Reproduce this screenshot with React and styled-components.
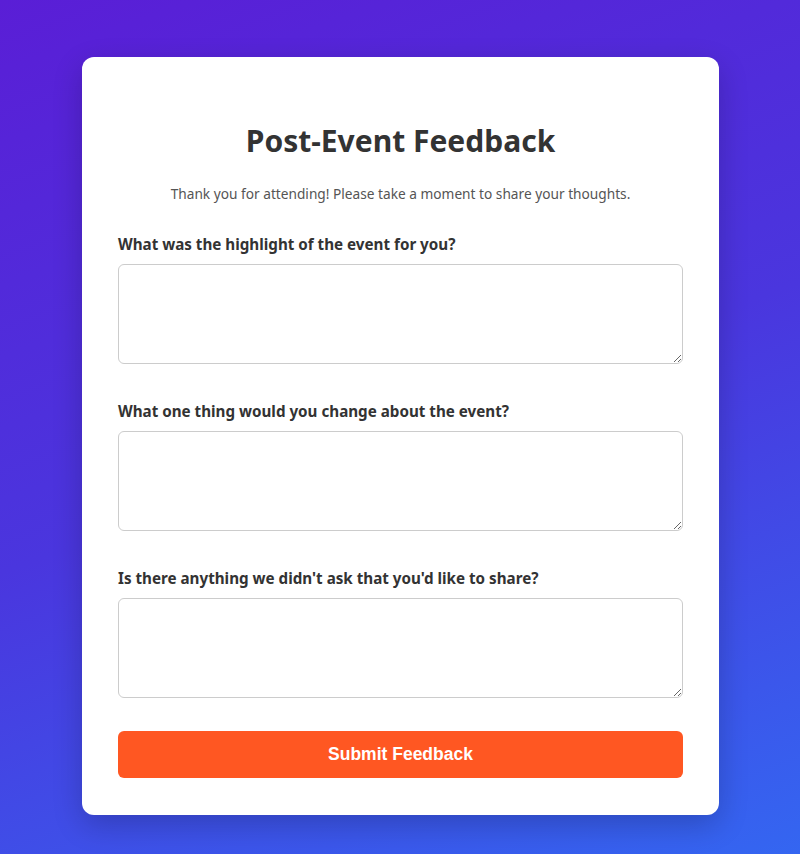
import React from "react";
import styled, { createGlobalStyle } from "styled-components";

const GlobalStyle = createGlobalStyle`
  * {
    box-sizing: border-box;
  }
  html, body {
    margin: 0;
    padding: 0;
  }
  body {
    min-height: 854px;
    font-family: "Noto Sans", "Open Sans", sans-serif;
    background: linear-gradient(160deg, #5a1ed6 0%, #4a36de 50%, #3466f1 100%);
  }
`;

const Page = styled.div`
  display: flex;
  justify-content: center;
  padding: 57px 0 40px 1px;
`;

const Card = styled.div`
  width: 637px;
  background: #ffffff;
  border-radius: 12px;
  padding: 65px 36px 37px;
  box-shadow: 0 10px 30px rgba(0, 0, 0, 0.2);
`;

const Title = styled.h1`
  margin: 0;
  font-size: 30px;
  line-height: 38px;
  font-weight: 700;
  color: #333333;
  text-align: center;
`;

const Subtitle = styled.p`
  margin: 23px 0 29px;
  font-size: 13.7px;
  line-height: 22px;
  color: #555555;
  text-align: center;
`;

const Form = styled.form`
  display: flex;
  flex-direction: column;
`;

const FieldGroup = styled.div`
  display: flex;
  flex-direction: column;
  gap: 9px;
  margin-bottom: 37px;
`;

const Label = styled.label`
  font-size: 15.2px;
  line-height: 21px;
  font-weight: 700;
  color: #333333;
`;

const TextArea = styled.textarea`
  display: block;
  width: 100%;
  height: 100px;
  padding: 10px;
  border: 1px solid #cccccc;
  border-radius: 6px;
  font-family: inherit;
  font-size: 15px;
  resize: vertical;
  outline: none;
`;

const SubmitButton = styled.button`
  margin-top: -4px;
  height: 47px;
  width: 100%;
  border: none;
  border-radius: 6px;
  background: #ff5722;
  color: #ffffff;
  font-family: "Liberation Sans", Arial, sans-serif;
  font-size: 17.5px;
  font-weight: 700;
  cursor: pointer;
`;

const questions = [
  { id: "highlight", text: "What was the highlight of the event for you?" },
  { id: "change", text: "What one thing would you change about the event?" },
  { id: "other", text: "Is there anything we didn't ask that you'd like to share?" },
];

const App = () => {
  return (
    <>
      <GlobalStyle />
      <Page>
        <Card>
          <Title>Post-Event Feedback</Title>
          <Subtitle>
            Thank you for attending! Please take a moment to share your thoughts.
          </Subtitle>
          <Form onSubmit={(e) => e.preventDefault()}>
            {questions.map((q) => (
              <FieldGroup key={q.id}>
                <Label htmlFor={q.id}>{q.text}</Label>
                <TextArea id={q.id} name={q.id} />
              </FieldGroup>
            ))}
            <SubmitButton type="submit">Submit Feedback</SubmitButton>
          </Form>
        </Card>
      </Page>
    </>
  );
};

export default App;
